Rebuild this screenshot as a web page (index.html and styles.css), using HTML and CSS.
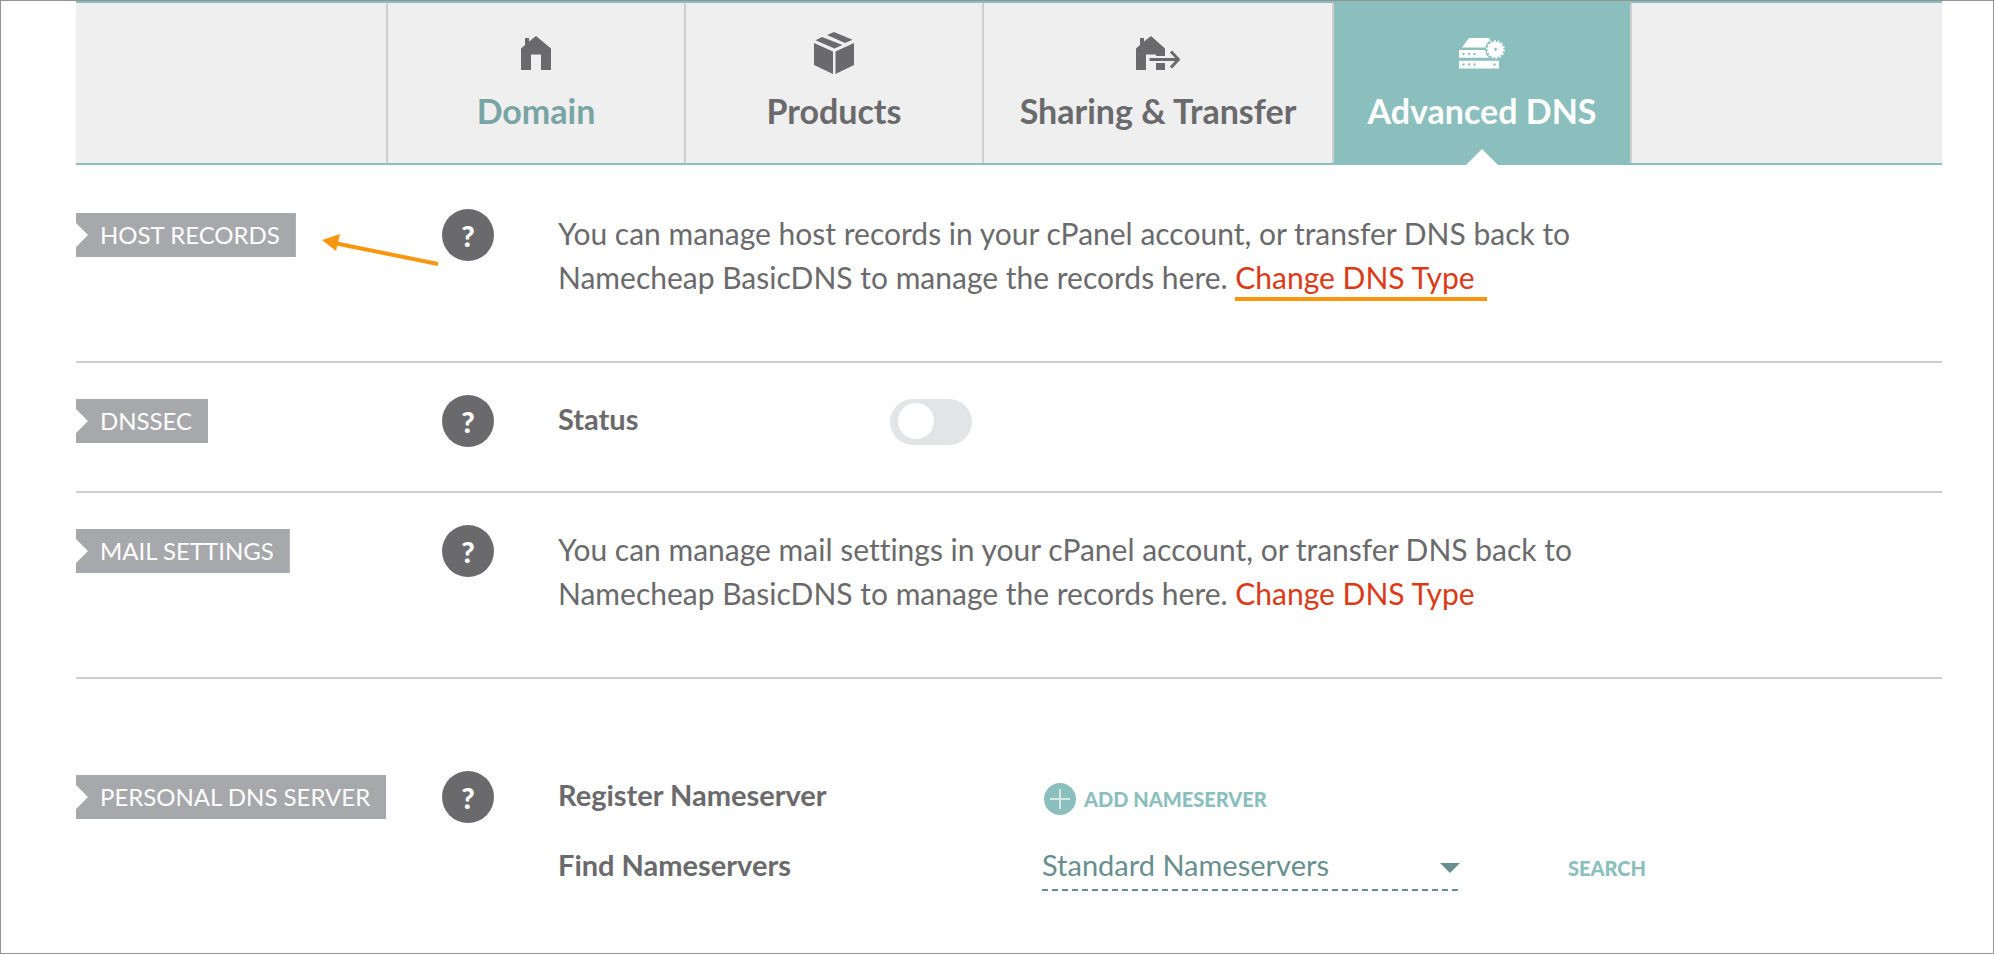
FILE: index.html
```html
<!DOCTYPE html>
<html lang="en">
<head>
  <meta charset="UTF-8" />
  <meta name="viewport" content="width=device-width, initial-scale=1.0"/>
  <title>Advanced DNS</title>
  <link rel="stylesheet" href="styles.css">
</head>
<body>
  <nav class="tabs">
    <a class="tab current" href="#domain">
      <span class="tab-icon">
        <svg width="30" height="34" viewBox="0 0 30 34"><path fill="currentColor" d="M0 34V12.5L4 9V2h4v3.5L15 0l15 12.5V34H20V18.5H10V34z"/></svg>
      </span>
      <span class="tab-label">Domain</span>
    </a>
    <a class="tab" href="#products">
      <span class="tab-icon">
        <svg width="40" height="42" viewBox="0 0 40 42"><path fill="currentColor" d="M0 11l19 8.500V42L0 33zM21.500 19.500L40 11v22l-18.500 9zM1.500 8.300L8 5l20.500 8-8 3.500zM13 3l7-3 18.500 7.800L31 11z"/></svg>
      </span>
      <span class="tab-label">Products</span>
    </a>
    <a class="tab wide" href="#sharing">
      <span class="tab-icon">
        <svg width="44" height="34" viewBox="0 0 44 34">
          <path fill="currentColor" d="M0 34V12.500L4 9V2h4v3.500L15 0l14 12.500V20h-9v-1.500H10V34zM20 27h9v7h-9z"/>
          <path fill="none" stroke="currentColor" stroke-width="3" d="M13.500 23.500H42M35 15.500l7.500 8-7.500 8"/>
        </svg>
      </span>
      <span class="tab-label">Sharing &amp; Transfer</span>
    </a>
    <a class="tab active" href="#advanced-dns" aria-current="page">
      <span class="tab-icon">
        <svg width="46" height="31" viewBox="0 0 46 31">
          <path fill="#fff" d="M10 0h20l3 4-4 5.500H3zM0 12h32v7.700H0zM0 22.700h40v7.700H0z"/>
          <circle cx="36.500" cy="11.500" r="10.500" fill="#8bbfbe"/>
          <circle cx="36.500" cy="11.500" r="7.800" fill="#fff"/>
          <circle cx="36.500" cy="11.500" r="8.300" fill="none" stroke="#fff" stroke-width="2" stroke-dasharray="2 1.720"/>
          <g fill="#8bbfbe">
            <circle cx="36.500" cy="11.500" r="1.400"/>
            <circle cx="4.500" cy="16" r="1.200"/><circle cx="10" cy="16" r="1.200"/><circle cx="15.500" cy="16" r="1.200"/>
            <circle cx="4.500" cy="26.500" r="1.200"/><circle cx="10" cy="26.500" r="1.200"/><circle cx="15.500" cy="26.500" r="1.200"/>
            <circle cx="35.500" cy="26.500" r="1.200"/>
          </g>
        </svg>
      </span>
      <span class="tab-label">Advanced DNS</span>
    </a>
  </nav>

  <main>
    <section class="row first">
      <h2 class="tag">Host Records</h2>
      <button class="help" type="button" aria-label="Help with host records">?</button>
      <p class="text">You can manage host records in your cPanel account, or transfer DNS back to<br>
        Namecheap BasicDNS to manage the records here. <a class="link marked" href="#dns-type">Change DNS Type</a></p>
      <svg class="arrow" width="120" height="34" viewBox="0 0 120 34">
        <path fill="none" stroke="#f9960f" stroke-width="4" d="M14 9l104 21"/>
        <path fill="#f9960f" d="M2 6l18-6-4 17z"/>
      </svg>
    </section>

    <section class="row short">
      <h2 class="tag">DNSSEC</h2>
      <button class="help" type="button" aria-label="Help with DNSSEC">?</button>
      <div class="status">
        <label class="name" for="dnssec">Status</label>
        <input class="toggle" type="checkbox" role="switch" id="dnssec">
      </div>
    </section>

    <section class="row">
      <h2 class="tag">Mail Settings</h2>
      <button class="help" type="button" aria-label="Help with mail settings">?</button>
      <p class="text">You can manage mail settings in your cPanel account, or transfer DNS back to<br>
        Namecheap BasicDNS to manage the records here. <a class="link" href="#dns-type">Change DNS Type</a></p>
    </section>

    <section class="row last">
      <h2 class="tag">Personal DNS Server</h2>
      <button class="help" type="button" aria-label="Help with personal DNS server">?</button>
      <div class="servers">
        <span class="name">Register Nameserver</span>
        <button class="action add" type="button">
          <svg width="32" height="32" viewBox="0 0 32 32"><circle cx="16" cy="16" r="16" fill="#8bbfbe"/><path stroke="#d6e9e8" stroke-width="2" d="M16 6v20M6 16h20"/></svg>
          Add Nameserver
        </button>
        <label class="name" for="ns-type">Find Nameservers</label>
        <div class="find">
          <div class="select">
            <select id="ns-type">
              <option>Standard Nameservers</option>
              <option>Custom Nameservers</option>
            </select>
            <svg class="caret" width="20" height="10" viewBox="0 0 20 10"><path fill="#678f8e" d="M0 0h20L10 10z"/></svg>
          </div>
          <button class="action" type="button">Search</button>
        </div>
      </div>
    </section>
  </main>
</body>
</html>
```

FILE: styles.css
```css
* {
  box-sizing: border-box;
}
body {
  margin: 0;
  min-height: 100vh;
  padding: 0 51px 0 75px;
  border: 1px solid #939393;
  background-color: #fff;
  color: #6a6a6c;
  font-family: Lato, "Open Sans", sans-serif;
  font-size: 29px;
  font-variant-ligatures: none;
  line-height: 44px;
}
button,
select {
  margin: 0;
  padding: 0;
  border: 0;
  background: none;
  font-family: inherit;
  cursor: pointer;
}

/* tabs */
.tabs {
  display: flex;
  justify-content: center;
  background-color: #efefef;
  border-top: 2px solid #8bbfbe;
  border-bottom: 2px solid #8bbfbe;
}
.tab {
  position: relative;
  width: 298px;
  padding: 29px 0 32px;
  border-right: 2px solid #cfcfcf;
  color: #6a6a6c;
  text-align: center;
  text-decoration: none;
}
.tab:first-child {
  width: 300px;
  border-left: 2px solid #cfcfcf;
}
.tab.wide {
  width: 350px;
}
.tab-icon {
  display: flex;
  align-items: center;
  justify-content: center;
  height: 42px;
  margin-bottom: 17px;
}
.tab-label {
  display: block;
  font-size: 34px;
  font-weight: bold;
  line-height: 40px;
}
.tab.current .tab-label {
  color: #78a5a4;
}
.tab.active {
  background-color: #8bbfbe;
}
.tab.active .tab-label {
  color: #fff;
}
.tab.active::after {
  content: "";
  position: absolute;
  left: 50%;
  bottom: -2px;
  margin-left: -16px;
  border: 16px solid transparent;
  border-top: 0;
  border-bottom-color: #fff;
}

/* rows */
.row {
  position: relative;
  display: grid;
  grid-template-columns: 366px 116px 1fr;
  align-items: start;
  padding: 32px 0 62px;
  border-bottom: 2px solid #cfcfcf;
}
.row.first {
  padding-top: 44px;
}
.row.short {
  padding-bottom: 44px;
}
.row.last {
  padding: 92px 0 0;
  border-bottom: 0;
}
.tag {
  justify-self: start;
  margin: 4px 0 0;
  padding: 0 16px 0 24px;
  background-color: #a7a8ac;
  clip-path: polygon(0 0, 100% 0, 100% 100%, 0 100%, 0 34px, 12px 22px, 0 10px);
  color: #fff;
  font-size: 24px;
  font-weight: normal;
  line-height: 44px;
  text-transform: uppercase;
}
.help {
  width: 52px;
  height: 52px;
  border-radius: 50%;
  background-color: #6a6a6c;
  color: #fff;
  font-size: 29px;
  font-weight: 900;
}
.text {
  margin: 2px 0 0;
  font-size: 30px;
}
.link {
  color: #dc3a17;
  text-decoration: none;
}
.marked {
  padding: 0 12px 2px 0;
  border-bottom: 4px solid #f9960f;
}
.arrow {
  position: absolute;
  left: 244px;
  top: 69px;
}
.name {
  font-weight: bold;
}

/* dnssec */
.status {
  display: grid;
  grid-template-columns: 332px auto;
  justify-content: start;
  align-items: start;
  margin-top: 2px;
}
.toggle {
  appearance: none;
  width: 82px;
  height: 46px;
  margin: 2px 0 0;
  padding: 4px 8px;
  border-radius: 23px;
  background-color: #e3e4e6;
  cursor: pointer;
}
.toggle::before {
  content: "";
  display: block;
  width: 36px;
  height: 36px;
  border-radius: 50%;
  background-color: #fff;
}
.toggle:checked {
  background-color: #8bbfbe;
}
.toggle:checked::before {
  margin-left: auto;
}

/* nameservers */
.servers {
  display: grid;
  grid-template-columns: 484px 1fr;
  row-gap: 22px;
  align-items: start;
  margin-top: 2px;
}
.action {
  color: #8bbfbe;
  font-size: 20px;
  font-weight: 900;
  line-height: 44px;
  text-transform: uppercase;
}
.add {
  display: flex;
  align-items: center;
  justify-self: start;
  gap: 8px;
  padding: 4px 0 0 2px;
}
.find {
  display: flex;
  align-items: baseline;
  gap: 108px;
}
.select {
  position: relative;
  width: 418px;
  padding-bottom: 6px;
  background: repeating-linear-gradient(90deg, #678f8e 0 6px, transparent 6px 10px) left bottom / 100% 2px no-repeat;
}
.select select {
  appearance: none;
  display: block;
  width: 100%;
  height: 42px;
  color: #678f8e;
  font-size: 29px;
}
.caret {
  position: absolute;
  right: 0;
  top: 20px;
  pointer-events: none;
}
```
